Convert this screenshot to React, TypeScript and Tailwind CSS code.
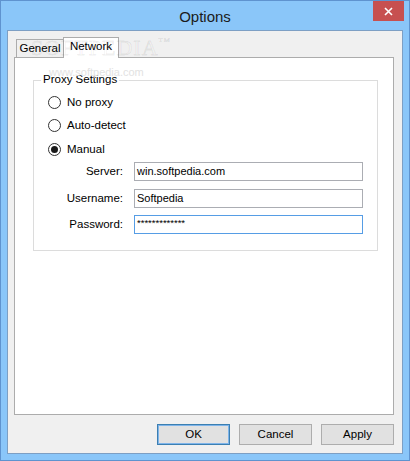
import React from "react";

const font = { fontFamily: '"Liberation Sans", Arial, sans-serif' };

function Radio({ checked, label }: { checked?: boolean; label: string }) {
  return (
    <div className="flex items-center h-[23px]">
      <div className="w-[13px] h-[13px] rounded-full border border-[#333] bg-white flex items-center justify-center">
        {checked && <div className="w-[7px] h-[7px] rounded-full bg-[#1a1a1a]" />}
      </div>
      <span className="ml-[6px] text-[11.5px] leading-none text-black">{label}</span>
    </div>
  );
}

function Field({ label, value, focused, secret }: { label: string; value: string; focused?: boolean; secret?: boolean }) {
  return (
    <div className="flex items-center h-[19px]">
      <div className="w-[89px] text-right text-[11.5px] leading-none text-black">{label}</div>
      <div
        className={
          "ml-[11px] w-[229px] h-[19px] bg-white border flex px-[2px] leading-none text-black " +
          (secret ? "items-start pt-[2px] text-[9.5px] " : "items-center text-[11px] ") +
          (focused ? "border-[#569de5]" : "border-[#abadb3]")
        }
      >
        {value}
      </div>
    </div>
  );
}

function Btn({ label, def }: { label: string; def?: boolean }) {
  return (
    <div
      className={
        "w-[73px] h-[21px] bg-[#e1e1e1] border flex items-center justify-center text-[11.5px] leading-none text-black " +
        (def ? "border-[#3c7fb1] outline outline-1 outline-[#7eb4ea] -outline-offset-2" : "border-[#adadad]")
      }
    >
      {label}
    </div>
  );
}

export default function App() {
  return (
    <div
      style={font}
      className="w-[410px] h-[461px] border border-[#5f93cf] bg-[#8ac6f9] flex flex-col relative overflow-hidden"
    >
      {/* Title bar */}
      <div className="h-[29px] relative flex items-center justify-center">
        <span className="text-[15px] leading-none text-[#1b1b1b] mt-[2px]">Options</span>
        <div className="absolute top-0 right-[5px] w-[31px] h-[20px] bg-[#c75050] flex items-center justify-center">
          <svg width="9" height="9" viewBox="0 0 9 9">
            <path d="M1 1 L8 8 M8 1 L1 8" stroke="white" strokeWidth="1.6" />
          </svg>
        </div>
      </div>

      {/* Client */}
      <div className="mx-[6px] mb-[6px] flex-1 border border-[#7d9fc4] bg-[#f0f0f0] flex flex-col pt-[6px] pl-[6px] pr-[8px] relative">
        {/* Tabs */}
        <div className="flex items-end h-[20px] ml-[2px]">
          <div className="w-[48px] h-[18px] border border-b-0 border-[#acacac] bg-[#f0f0f0] flex items-center justify-center text-[11.5px] leading-none text-black">
            General
          </div>
          <div className="w-[56px] h-[21px] -ml-[1px] mb-[-1px] border border-b-0 border-[#acacac] bg-white flex items-center justify-center text-[11.5px] leading-none text-black relative z-10 -mt-[1px] pb-[2px]">
            Network
          </div>
        </div>

        {/* Pane */}
        <div className="h-[358px] border border-[#acacac] bg-white pt-[22px] pl-[18px] pr-[15px]">
          <div className="h-[171px] border border-[#dcdcdc] relative pt-[10px] pl-[14px]">
            <div className="absolute -top-[7px] left-[7px] bg-white px-[2px] text-[11.5px] leading-none text-black">
              Proxy Settings
            </div>
            <Radio label="No proxy" />
            <Radio label="Auto-detect" />
            <div className="h-[1px]" />
            <Radio checked label="Manual" />
            <div className="-ml-[14px] mt-[1px] flex flex-col gap-[8px]">
              <Field label="Server:" value="win.softpedia.com" />
              <Field label="Username:" value="Softpedia" />
              <div className="-mt-[1px]">
                <Field label="Password:" value="*************" focused secret />
              </div>
            </div>
          </div>
        </div>

        {/* Buttons */}
        <div className="flex justify-end gap-[9px] mt-[9px]">
          <Btn label="OK" def />
          <Btn label="Cancel" />
          <Btn label="Apply" />
        </div>
      </div>

      {/* Watermark overlay */}
      <div
        className="absolute left-[30px] top-[36px] text-[22px] leading-none tracking-[1px] text-transparent pointer-events-none z-20 [-webkit-text-stroke:1px_rgba(0,0,0,0.07)]"
        style={{ fontFamily: '"Liberation Serif", serif' }}
      >
        SOFTPEDIA<span className="text-[7px] align-top [-webkit-text-stroke:0.5px_rgba(0,0,0,0.1)]">TM</span>
      </div>
      <div className="absolute left-[48px] top-[66px] text-[11px] leading-none text-[#e2e2e2] pointer-events-none z-20">
        www.softpedia.com
      </div>
    </div>
  );
}
